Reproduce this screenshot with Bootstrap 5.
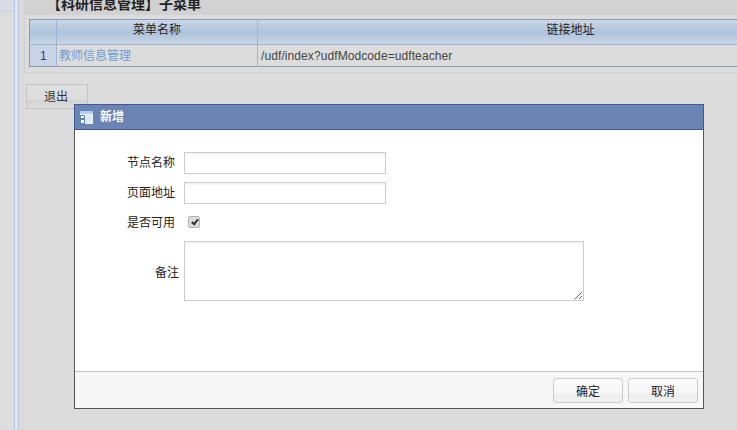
<!DOCTYPE html>
<html lang="zh">
<head>
<meta charset="utf-8">
<title>新增</title>
<link href="https://cdn.jsdelivr.net/npm/bootstrap@5.3.0/dist/css/bootstrap.min.css" rel="stylesheet">
<style>
html,body{height:100%;overflow:hidden}
body{background:#dcdcdc;font-family:"Liberation Sans","Noto Sans CJK SC",sans-serif;font-size:12px;color:#333}
.shell{height:430px;width:737px;overflow:hidden}
.side-strip{width:14px;flex:none;background:#dddddd}
.side-strip i{display:block;height:12px;border-bottom:1px solid #c5d2e6;background:#d9dce2}
.side-rule{width:5px;flex:none;background:#e2e5ea;border-left:1px solid #b4c6e4;border-right:1px solid #b4c6e4}
.main-area{flex:1 1 auto;min-width:0;padding-left:5px}
.sub-panel{border:1px solid #d0d0d0;border-top:0;border-right:0;height:73px}
.panel-title{height:15px;background:#d2d2d2;font-size:14px;font-weight:700;line-height:8px;color:#222;padding-left:22px}
.panel-title span{display:block}
.menu-table{width:calc(100% - 4px);margin:4px 0 0 4px;border-collapse:collapse;border:1px solid #8a9ab5;border-right:0;table-layout:fixed;font-size:12px}
.menu-table th{height:25px;padding:0;text-align:center;font-weight:400;color:#222;border-right:1px solid #9fb4d4;border-bottom:1px solid #9fb4d4;background:linear-gradient(#c9d6e6,#aec3db 50%,#c9d6e6);line-height:21px;vertical-align:top}
.menu-table th:last-child{border-right:0;padding-left:146px}
.menu-table td{height:22px;padding:0 2px;border-right:1px solid #9fb4d4;vertical-align:middle;color:#444;background:#dcdcdc;letter-spacing:.09px}
.menu-table td:last-child{border-right:0;padding-left:3px}
.menu-table td.row-no{background:#c8d4e6;text-align:center;color:#44307a;padding-left:3px}
.menu-table a{color:#6a9fd6;text-decoration:none;letter-spacing:0}
.exit-btn{width:62px;height:25px;margin:11px 0 0 2px;border:1px solid #c4c4c4;border-radius:0;background:linear-gradient(#dedede 55%,#d4d4d4 70%,#dcdcdc);font-size:12px;color:#333;padding:0 2px 0 0;line-height:24px}
.dlg{position:absolute;left:74px;top:104px;width:630px;height:305px;background:#fff;border:1px solid #555;border-top:0}
.dlg-head{height:26px;margin:0 -1px;background:#6c84b3;border:1px solid #3f5a98;color:#fff;font-weight:700;font-size:12px;gap:6px;padding-left:4px}
.dlg-body{flex:1 1 auto;padding:22px 0 0 0}
.field-row{height:22px;margin-bottom:8px}
.field-label{width:100px;text-align:right;color:#222;font-size:12px;flex:none;padding-right:0}
.field-input{width:202px;height:22px;border:1px solid #ccc;margin-left:9px;background:linear-gradient(#f3f3f3,#fff 4px);border-radius:0;outline:0}
.check-box{appearance:none;width:12px;height:12px;margin:-3px 0 0 13px;border:1px solid #b4b4b4;border-radius:2px;background:#dcdcdc;position:relative}
.check-box:checked::after{content:"";position:absolute;left:3.5px;top:1px;width:4px;height:7px;border:solid #333;border-width:0 2px 2px 0;transform:rotate(40deg)}
.note-row{margin-top:-1px}
.note-label{width:104px;text-align:right;color:#222;flex:none;padding-top:4px}
.note-input{width:400px;height:60px;border:1px solid #ccc;margin-left:5px;background:linear-gradient(#f3f3f3,#fff 4px);border-radius:0;outline:0;display:block}
.dlg-foot{height:37px;background:#f7f7f7;border-top:1px solid #c4c4c4;padding:6px 5px 0 0;gap:5px}
.foot-btn{width:70px;height:25px;padding:1px 0 0;border:1px solid #ccc;border-radius:3px;background:linear-gradient(#fbfbfb,#f7f7f7 55%,#eeeeee 75%,#f3f3f3);color:#222;font-size:12px;line-height:24px}
</style>
</head>
<body>
<div class="shell d-flex position-relative">
  <div class="side-strip"><i></i></div>
  <div class="side-rule"></div>
  <div class="main-area">
    <div class="sub-panel">
      <div class="panel-title"><span>【科研信息管理】子菜单</span></div>
      <table class="menu-table">
        <colgroup><col style="width:27px"><col style="width:201px"><col></colgroup>
        <thead><tr><th></th><th>菜单名称</th><th>链接地址</th></tr></thead>
        <tbody><tr><td class="row-no">1</td><td><a href="#">教师信息管理</a></td><td>/udf/index?udfModcode=udfteacher</td></tr></tbody>
      </table>
    </div>
    <button type="button" class="btn exit-btn d-block">退出</button>
  </div>
  <div class="dlg d-flex flex-column">
    <div class="dlg-head d-flex align-items-center">
      <svg width="15" height="15" viewBox="0 0 15 15"><rect x=".5" y=".5" width="14" height="14" fill="#f2f5fb" stroke="#5f82c4"/><rect x="1" y="1" width="13" height="3" fill="#b3cdf2"/><rect x="7" y="5" width="6" height="8" fill="#dfe8f6"/><rect x="1.5" y="5.5" width="4" height="3" fill="#fff" stroke="#5f82c4"/><rect x="1.5" y="9.5" width="4" height="4" fill="#fff" stroke="#5f82c4"/></svg>
      <span>新增</span>
    </div>
    <div class="dlg-body">
      <div class="field-row d-flex align-items-center"><span class="field-label">节点名称</span><input class="field-input" type="text"></div>
      <div class="field-row d-flex align-items-center"><span class="field-label">页面地址</span><input class="field-input" type="text"></div>
      <div class="field-row d-flex align-items-center"><span class="field-label">是否可用</span><input class="check-box" type="checkbox" checked></div>
      <div class="note-row d-flex align-items-center"><span class="note-label">备注</span><textarea class="note-input"></textarea></div>
    </div>
    <div class="dlg-foot d-flex justify-content-end">
      <button type="button" class="btn foot-btn">确定</button>
      <button type="button" class="btn foot-btn">取消</button>
    </div>
  </div>
</div>
<script src="https://cdn.jsdelivr.net/npm/bootstrap@5.3.0/dist/js/bootstrap.bundle.min.js"></script>
</body>
</html>
